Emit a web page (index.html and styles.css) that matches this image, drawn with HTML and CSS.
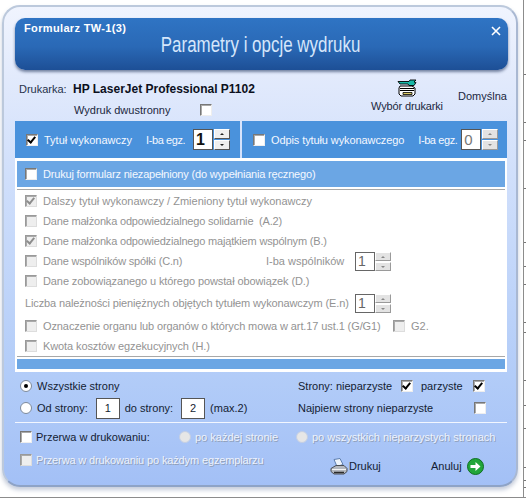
FILE: index.html
```html
<!DOCTYPE html>
<html lang="pl">
<head>
    <meta charset="UTF-8">
    <meta name="viewport" content="width=device-width, initial-scale=1.0">
    <title>Parametry i opcje wydruku</title>
    <link rel="stylesheet" href="styles.css">
</head>
<body>
    <div class="page">
        <div class="stage">
            <div class="window">
                <div class="header">
                    <div class="header-top">
                        <span class="form-name">Formularz TW-1(3)</span>
                        <span class="close">
                            <svg width="10" height="10" viewBox="0 0 10 10"><path d="M1 1l8 8M9 1l-8 8" stroke="#fff" stroke-width="1.6"/></svg>
                        </span>
                    </div>
                    <div class="title"><span>Parametry i opcje wydruku</span></div>
                </div>

                <div class="printer">
                    <div class="printer-left">
                        <div class="printer-name">
                            <span class="printer-label">Drukarka:</span>
                            <b>HP LaserJet Professional P1102</b>
                        </div>
                        <div class="duplex">
                            <span>Wydruk dwustronny</span>
                            <span class="check"></span>
                        </div>
                    </div>
                    <div class="picker">
                        <svg width="20" height="18" viewBox="0 0 20 18">
                            <path d="M1 2.500h11l1-1.500h6l-2 2 2 .5-2 3h-5l-1-1.500H3z" fill="#18b8a8" stroke="#000" stroke-width="0.9"/>
                            <path d="M3 7h12l3 2v6l-2 2H4l-2-2V9z" fill="#fff" stroke="#000"/>
                            <path d="M3 9.500h14M3 11.500h14" stroke="#000"/>
                            <path d="M6 13.500h9v2H6z" fill="#d8c860" stroke="#000" stroke-width="0.8"/>
                        </svg>
                        <span>Wybór drukarki</span>
                    </div>
                    <div class="default-label">Domyślna</div>
                </div>

                <div class="bands">
                    <div class="band band-main">
                        <span class="check checked"></span>
                        <span class="band-text">Tytuł wykonawczy</span>
                        <span class="band-text copies">I-ba egz.</span>
                        <span class="spin-input strong">1</span>
                        <span class="spinner"><i class="up"></i><i class="down"></i></span>
                    </div>
                    <div class="band band-copy">
                        <span class="check"></span>
                        <span class="band-text">Odpis tytułu wykonawczego</span>
                        <span class="band-text copies">I-ba egz.</span>
                        <span class="spin-input faded">0</span>
                        <span class="spinner off"><i class="up"></i><i class="down"></i></span>
                    </div>
                </div>

                <div class="panel">
                    <div class="blank-band">
                        <span class="check"></span>
                        <span class="band-text tight">Drukuj formularz niezapełniony (do wypełniania ręcznego)</span>
                    </div>
                    <div class="options">
                        <div class="option"><span class="check dim ticked"></span>Dalszy tytuł wykonawczy / Zmieniony tytuł wykonawczy</div>
                        <div class="option tight"><span class="check dim"></span>Dane małżonka odpowiedzialnego solidarnie&nbsp; (A.2)</div>
                        <div class="option tight"><span class="check dim ticked"></span>Dane małżonka odpowiedzialnego majątkiem wspólnym (B.)</div>
                        <div class="option">
                            <span class="check dim"></span>
                            <span class="partners tight">Dane wspólników spółki (C.n)</span>
                            <span class="partners-count">I-ba wspólników</span>
                            <span class="spin-input small">1</span>
                            <span class="spinner off small"><i class="up"></i><i class="down"></i></span>
                        </div>
                        <div class="option slight"><span class="check dim"></span>Dane zobowiązanego u którego powstał obowiązek (D.)</div>
                        <div class="option amount">
                            <span class="amount-text">Liczba należności pieniężnych objętych tytułem wykonawczym (E.n)</span>
                            <span class="spin-input small">1</span>
                            <span class="spinner off small"><i class="up"></i><i class="down"></i></span>
                        </div>
                        <div class="option organ">
                            <span class="check dim"></span>
                            <span class="organ-text slight">Oznaczenie organu lub organów o których mowa w art.17 ust.1 (G/G1)</span>
                            <span class="check dim"></span>
                            <span class="g2">G2.</span>
                        </div>
                        <div class="option slight"><span class="check dim"></span>Kwota kosztów egzekucyjnych (H.)</div>
                    </div>
                    <div class="panel-foot"></div>
                </div>

                <div class="pages">
                    <div class="pages-left">
                        <div class="line"><span class="radio on"></span>Wszystkie strony</div>
                        <div class="line">
                            <span class="radio"></span>Od strony:
                            <span class="page-box">1</span>do strony:
                            <span class="page-box">2</span>(max.2)
                        </div>
                    </div>
                    <div class="pages-right">
                        <div class="line">
                            <span class="sides-a">Strony: nieparzyste</span>
                            <span class="check checked"></span>
                            <span class="sides-b">parzyste</span>
                            <span class="check checked"></span>
                        </div>
                        <div class="line">
                            <span class="sides-first">Najpierw strony nieparzyste</span>
                            <span class="check"></span>
                        </div>
                    </div>
                </div>

                <div class="rule"></div>

                <div class="pause">
                    <span class="check"></span>
                    <span class="pause-label">Przerwa w drukowaniu:</span>
                    <span class="radio off"></span>
                    <span class="off-text each">po każdej stronie</span>
                    <span class="radio off"></span>
                    <span class="off-text">po wszystkich nieparzystych stronach</span>
                </div>

                <div class="actions">
                    <span class="check dim"></span>
                    <span class="off-text every-copy">Przerwa w drukowaniu po każdym egzemplarzu</span>
                    <span class="action print">
                        <svg width="18" height="17" viewBox="0 0 18 17">
                            <path d="M4 1.500l6-1 3 6-6 2z" fill="#eef4fb" stroke="#5f7fae"/>
                            <path d="M1 10.500l5-3h8l3 3v3l-3 2.500H4l-3-2.500z" fill="#b4b8bf" stroke="#4b4f55"/>
                            <path d="M2 11.500h14" stroke="#f4f4f4"/>
                            <path d="M4 14.500h10" stroke="#2b2b2b" stroke-width="1.500"/>
                        </svg>
                        Drukuj
                    </span>
                    <span class="action cancel">
                        Anuluj
                        <svg width="17" height="17" viewBox="0 0 17 17">
                            <circle cx="8.500" cy="8.500" r="8" fill="#22a63a" stroke="#0f6f22"/>
                            <path d="M3.500 7h5V4l5 4.500-5 4.500v-3h-5z" fill="#fff"/>
                        </svg>
                    </span>
                </div>
            </div>
        </div>
        <svg class="ticks" width="2" height="497" viewBox="0 0 2 497">
            <path d="M0 74.500h2M0 122.500h2M0 140.500h2M0 188.500h2M0 242.500h2M0 266.500h2M0 284.500h2M0 322.500h2M0 332.500h2M0 380.500h2M0 405.500h2M0 428.500h2M0 467.500h2M0 480.500h2M0 487.500h2" stroke="#777"/>
        </svg>
    </div>
</body>
</html>
```

FILE: styles.css
```css
body {
    margin: 0;
    background-color: #fff;
    font-family: "Liberation Sans", Arial, sans-serif;
    font-size: 11px;
    color: #1b2740;
}

.page {
    display: flex;
    width: 526px;
    height: 498px;
    box-sizing: border-box;
    border-bottom: 1px solid #8c8c8c;
}

.stage {
    width: 524px;
    box-sizing: border-box;
    padding: 5px 0 0 2px;
    border-right: 1px solid #8c8c8c;
}

.ticks {
    display: block;
}

.window {
    width: 516px;
    height: 482px;
    box-sizing: border-box;
    padding: 11px 8px 0 11px;
    border: 2px solid #bcc9dc;
    border-bottom-color: #8ea3c6;
    border-right-color: #a9b8d2;
    border-radius: 18px;
    background: linear-gradient(#f0f4fe 0, #e2eafc 70px, #d0dffb 170px, #b2ccf8 370px, #a3c0f6 100%);
    box-shadow: 0 3px 4px rgba(90, 110, 150, 0.35);
}

.header {
    width: 493px;
    height: 52px;
    box-sizing: border-box;
    padding: 4px 7px 0 9px;
    border-radius: 10px;
    background: linear-gradient(#2f74c4 0, #2a69b6 55%, #1d4f96 100%);
    box-shadow: 0 2px 3px rgba(40, 60, 100, 0.6);
    color: #fff;
}

.header-top {
    display: flex;
    justify-content: space-between;
    align-items: flex-start;
    height: 14px;
}

.form-name {
    font-weight: bold;
    font-size: 11px;
    letter-spacing: 0.35px;
}

.close {
    display: block;
    height: 10px;
    margin-top: 4px;
}

.close svg {
    display: block;
}

.title {
    margin: -4px 0 0 -3px;
    text-align: center;
    font-size: 22px;
    line-height: 26px;
    color: #d5e6fb;
}

.title span {
    display: inline-block;
    transform: scaleX(0.77);
}

/* drukarka */
.printer {
    display: flex;
    height: 51px;
}

.printer-left {
    width: 356px;
    padding: 12px 0 0 4px;
    box-sizing: border-box;
}

.printer-name {
    display: flex;
    align-items: center;
    height: 14px;
    color: #27334b;
}

.printer-name b {
    font-size: 12px;
    color: #0c1020;
    margin-left: 9px;
}

.printer-label {
    width: 45px;
}

.duplex {
    display: flex;
    align-items: center;
    margin: 7px 0 0 55px;
    height: 13px;
}

.duplex span:first-child {
    width: 126px;
}

.picker {
    width: 72px;
    display: flex;
    flex-direction: column;
    align-items: center;
    padding-top: 9px;
}

.picker span {
    margin-top: 3px;
    letter-spacing: -0.15px;
    white-space: nowrap;
}

.default-label {
    padding-top: 20px;
    margin-left: 15px;
}

/* zakładki niebieskie */
.bands {
    display: flex;
    gap: 2px;
    height: 37px;
    width: 492px;
}

.band {
    display: flex;
    align-items: center;
    background-color: #4a92dc;
    box-sizing: border-box;
}

.band-main {
    width: 225px;
    padding-left: 11px;
}

.band-copy {
    width: 265px;
    padding-left: 11px;
}

.band-text {
    color: #f4f8ff;
    margin-left: 6px;
    white-space: nowrap;
}

.band-copy .band-text {
    letter-spacing: -0.1px;
}

.band .copies {
    width: 39px;
    margin-left: 14px;
    letter-spacing: -0.4px;
}

.band-copy .copies {
    letter-spacing: -0.4px;
}

.check {
    display: inline-block;
    flex: none;
    width: 12px;
    height: 12px;
    box-sizing: border-box;
    background-color: #fff;
    border: 1px solid;
    border-color: #777 #eee #eee #777;
    box-shadow: inset 1px 1px 0 #aaa;
    position: relative;
}

.checked::after,
.ticked::after {
    content: "";
    position: absolute;
    left: 2px;
    top: 0;
    width: 3px;
    height: 6px;
    border: solid #000;
    border-width: 0 2px 2px 0;
    transform: rotate(40deg);
}

.dim {
    background-color: #eee;
    border-color: #999 #ddd #ddd #999;
}

.ticked::after {
    border-color: #8d8d8d;
}

.spin-input {
    display: flex;
    align-items: center;
    flex: none;
    width: 20px;
    height: 21px;
    box-sizing: border-box;
    padding-left: 2px;
    margin-left: 8px;
    background-color: #fff;
    border: 1px solid #555;
    font-size: 16px;
    color: #111;
}

.strong {
    font-weight: bold;
}

.band-copy .spin-input {
    margin-left: 4px;
}

.faded {
    color: #777;
    font-size: 15px;
}

.spinner {
    display: flex;
    flex-direction: column;
    flex: none;
    gap: 1px;
    margin-left: 1px;
    width: 16px;
    height: 21px;
}

.spinner i {
    flex: 1;
    background-color: #efefef;
    border: 1px solid;
    border-color: #fff #555 #555 #fff;
    position: relative;
}

.spinner.off i {
    background-color: #e3e3e3;
    border-color: #fff #9a9a9a #9a9a9a #fff;
}

.spinner i::after {
    content: "";
    position: absolute;
    left: 5px;
    top: 3px;
    border: 2px solid transparent;
}

.spinner .up::after {
    border-top-width: 0;
    border-bottom-color: #222;
}

.spinner .down::after {
    border-bottom-width: 0;
    border-top-color: #222;
}

.spinner.off i::after {
    border-top-color: transparent;
    border-bottom-color: #888;
}

.spinner.off .down::after {
    border-top-color: #888;
    border-bottom-color: transparent;
}

/* panel opcji */
.panel {
    width: 492px;
    height: 214px;
    box-sizing: border-box;
    padding: 3px 2px 3px;
    background-color: #fff;
}

.blank-band {
    display: flex;
    align-items: center;
    height: 26px;
    padding-left: 8px;
    background-color: #6ba6e4;
}

.options {
    margin-top: 2px;
    height: 168px;
    box-sizing: border-box;
    padding-top: 1px;
    border-top: 1px solid #a8a8a8;
    border-bottom: 1px solid #a8a8a8;
}

.option {
    display: flex;
    align-items: center;
    height: 20px;
    padding-left: 8px;
    color: #939393;
    white-space: nowrap;
}

.tight {
    letter-spacing: -0.18px;
}

.slight {
    letter-spacing: -0.1px;
}

.option > .check:first-child {
    margin-right: 6px;
}

.partners {
    width: 223px;
}

.partners-count {
    width: 89px;
}

.spin-input.small {
    width: 20px;
    height: 19px;
    margin-left: 0;
    color: #666;
    font-size: 14px;
    border-color: #666;
}

.spinner.small {
    height: 19px;
    width: 16px;
    margin-left: 0;
}

.amount {
    height: 24px;
}

.amount-text {
    width: 330px;
    letter-spacing: -0.12px;
}

.organ {
    height: 21px;
}

.organ-text {
    width: 350px;
}

.g2 {
    margin-left: 6px;
}

.panel-foot {
    height: 10px;
    margin-top: 2px;
    background-color: #6ba6e4;
}

/* zakres stron */
.pages {
    display: flex;
    height: 50px;
    padding-top: 3px;
    box-sizing: border-box;
}

.pages-left {
    width: 283px;
    padding-left: 5px;
    box-sizing: border-box;
}

.line {
    display: flex;
    align-items: center;
    height: 22px;
    color: #141d33;
}

.radio {
    display: inline-block;
    flex: none;
    width: 12px;
    height: 12px;
    box-sizing: border-box;
    margin-right: 5px;
    border-radius: 50%;
    border: 1px solid #7d8a9c;
    background-color: #fff;
    position: relative;
}

.radio.on::after {
    content: "";
    position: absolute;
    left: 3px;
    top: 3px;
    width: 4px;
    height: 4px;
    border-radius: 50%;
    background-color: #000;
}

.radio.off {
    background-color: #e6e6e6;
    border-color: #c4cfe4;
    margin-right: 4px;
}

.page-box {
    display: flex;
    align-items: center;
    justify-content: center;
    width: 24px;
    height: 21px;
    box-sizing: border-box;
    margin: 0 5px 0 8px;
    background-color: #fff;
    border: 1px solid #555;
}

.sides-a {
    width: 103px;
}

.sides-b {
    width: 52px;
    margin-left: 8px;
}

.sides-first {
    width: 176px;
}

.rule {
    width: 492px;
    height: 1px;
    background-color: #f2f6ff;
}

.pause {
    display: flex;
    align-items: center;
    height: 28px;
    padding-left: 5px;
}

.pause-label {
    width: 143px;
    margin-left: 4px;
    color: #141d33;
}

.off-text {
    color: #edf2fd;
    text-shadow: 1px 1px 0 #8f9fb8;
    white-space: nowrap;
}

.each {
    width: 101px;
}

.actions {
    display: flex;
    align-items: center;
    height: 18px;
    padding-left: 5px;
}

.every-copy {
    width: 294px;
    margin-left: 4px;
    letter-spacing: -0.13px;
}

.action {
    display: flex;
    align-items: center;
    color: #141d33;
}

.print {
    gap: 1px;
    width: 101px;
    margin-top: 12px;
}

.cancel {
    gap: 5px;
    margin-top: 12px;
}
```
